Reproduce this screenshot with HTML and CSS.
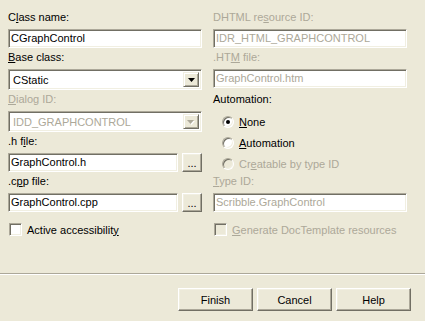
FILE: index.html
```html
<!DOCTYPE html>
<html>
<head>
  <meta charset="utf-8">
  <title>MFC Class Wizard</title>
  <link rel="stylesheet" href="styles.css">
</head>
<body>
  <div class="dialog">
    <div class="panes">
      <div class="pane">
        <div class="field">
          <div class="label">C<u>l</u>ass name:</div>
          <div class="edit">CGraphControl</div>
        </div>
        <div class="field">
          <div class="label"><u>B</u>ase class:</div>
          <div class="combo">
            <span class="combo-text">CStatic</span>
            <span class="drop"><svg width="7" height="4" viewBox="0 0 7 4"><polygon points="0,0 7,0 3.5,4"/></svg></span>
          </div>
        </div>
        <div class="field disabled">
          <div class="label"><u>D</u>ialog ID:</div>
          <div class="combo">
            <span class="combo-text">IDD_GRAPHCONTROL</span>
            <span class="drop"><svg width="8" height="5" viewBox="0 0 8 5"><polygon class="arrow-shadow" points="1,1 8,1 4.5,5"/><polygon points="0,0 7,0 3.5,4"/></svg></span>
          </div>
        </div>
        <div class="field">
          <div class="label">.h f<u>i</u>le:</div>
          <div class="browse-row">
            <div class="edit">GraphControl.h</div>
            <button class="btn browse" type="button">...</button>
          </div>
        </div>
        <div class="field">
          <div class="label">.c<u>p</u>p file:</div>
          <div class="browse-row">
            <div class="edit">GraphControl.cpp</div>
            <button class="btn browse" type="button">...</button>
          </div>
        </div>
        <div class="check-row">
          <span class="checkbox"></span>
          <span>Active accessibilit<u>y</u></span>
        </div>
      </div>

      <div class="pane">
        <div class="field disabled">
          <div class="label">DHTML re<u>s</u>ource ID:</div>
          <div class="edit">IDR_HTML_GRAPHCONTROL</div>
        </div>
        <div class="field disabled">
          <div class="label">.HT<u>M</u> file:</div>
          <div class="edit">GraphControl.htm</div>
        </div>
        <div class="label automation-label">Automation:</div>
        <div class="radio-group">
          <div class="radio-row"><span class="radio checked"></span><span><u>N</u>one</span></div>
          <div class="radio-row"><span class="radio"></span><span><u>A</u>utomation</span></div>
          <div class="radio-row disabled"><span class="radio"></span><span>Cr<u>e</u>atable by type ID</span></div>
        </div>
        <div class="field disabled type-id">
          <div class="label"><u>T</u>ype ID:</div>
          <div class="edit">Scribble.GraphControl</div>
        </div>
        <div class="check-row disabled">
          <span class="checkbox"></span>
          <span><u>G</u>enerate DocTemplate resources</span>
        </div>
      </div>
    </div>

    <div class="separator"></div>

    <div class="buttons">
      <button class="btn push" type="button">Finish</button>
      <button class="btn push" type="button">Cancel</button>
      <button class="btn push" type="button">Help</button>
    </div>
  </div>
</body>
</html>
```

FILE: styles.css
```css
html, body {
  margin: 0;
  height: 321px;
  overflow: hidden;
}

body {
  background-color: #ece9d8;
  color: #000;
  font-family: "Liberation Sans", Arial, sans-serif;
  font-size: 11px;
}

.dialog {
  display: flex;
  flex-direction: column;
  height: 321px;
}

.panes {
  display: grid;
  grid-template-columns: 194px 194px;
  column-gap: 11px;
  padding: 11px 0 0 8px;
}

.pane {
  display: flex;
  flex-direction: column;
}

.label {
  height: 13px;
  line-height: 13px;
  margin-bottom: 5px;
  white-space: nowrap;
}

.field + .field {
  margin-top: 3px;
}

.disabled,
.disabled .edit,
.disabled .combo-text {
  color: #aca899;
}

/* sunken 3d frame shared by edits, combos and check boxes */
.edit,
.combo,
.checkbox,
.radio {
  box-sizing: border-box;
  border: 1px solid;
  border-color: #aca899 #fff #fff #aca899;
  box-shadow: inset 1px 1px #716f64, inset -1px -1px #f1efe2;
  background-color: #fff;
}

.edit {
  height: 19px;
  line-height: 17px;
  padding: 0 2px;
  white-space: nowrap;
  overflow: hidden;
}

.combo {
  display: flex;
  align-items: stretch;
  height: 21px;
  padding: 2px;
}

.combo-text {
  flex: 1;
  line-height: 17px;
  padding-left: 2px;
}

.drop {
  display: flex;
  align-items: center;
  justify-content: center;
  width: 16px;
  box-sizing: border-box;
  border: 1px solid;
  border-color: #f1efe2 #716f64 #716f64 #f1efe2;
  box-shadow: inset 1px 1px #fff, inset -1px -1px #aca899;
  background-color: #ece9d8;
}

.drop svg {
  display: block;
  margin-top: 1px;
  fill: #000;
}

.disabled .drop svg {
  fill: #aca899;
}

.disabled .drop svg .arrow-shadow {
  fill: #fff;
}

.browse-row {
  display: flex;
  gap: 4px;
}

.browse-row .edit {
  flex: 1;
}

.btn {
  box-sizing: border-box;
  margin: 0;
  padding: 0;
  border: 1px solid;
  border-color: #fff #716f64 #716f64 #fff;
  box-shadow: inset -1px -1px #aca899, inset 1px 1px #f1efe2;
  background-color: #ece9d8;
  color: #000;
  font-family: inherit;
  font-size: 11px;
}

.browse {
  width: 20px;
  height: 19px;
  line-height: 15px;
  padding-top: 2px;
}

.check-row {
  display: flex;
  align-items: center;
  gap: 5px;
  margin-top: 11px;
  margin-left: 1px;
  height: 13px;
  white-space: nowrap;
}

.checkbox {
  width: 13px;
  height: 13px;
  flex: none;
}

.disabled .checkbox,
.disabled .radio {
  background-color: #ece9d8;
}

.automation-label {
  margin-top: 5px;
  margin-bottom: 0;
}

.radio-group {
  margin-top: 5px;
}

.radio-row {
  display: flex;
  align-items: center;
  gap: 5px;
  height: 21px;
  padding-left: 9px;
  white-space: nowrap;
}

.radio {
  position: relative;
  width: 12px;
  height: 12px;
  border-radius: 50%;
  flex: none;
}

.radio.checked::after {
  content: "";
  position: absolute;
  left: 3px;
  top: 3px;
  width: 4px;
  height: 4px;
  border-radius: 50%;
  background-color: #000;
}

.type-id {
  margin-top: 1px;
}

.separator {
  margin-top: auto;
  border-top: 1px solid #aca899;
  border-bottom: 1px solid #fff;
}

.buttons {
  display: flex;
  justify-content: flex-end;
  gap: 4px;
  padding: 13px 14px 10px 0;
}

.push {
  width: 75px;
  height: 23px;
}
```
